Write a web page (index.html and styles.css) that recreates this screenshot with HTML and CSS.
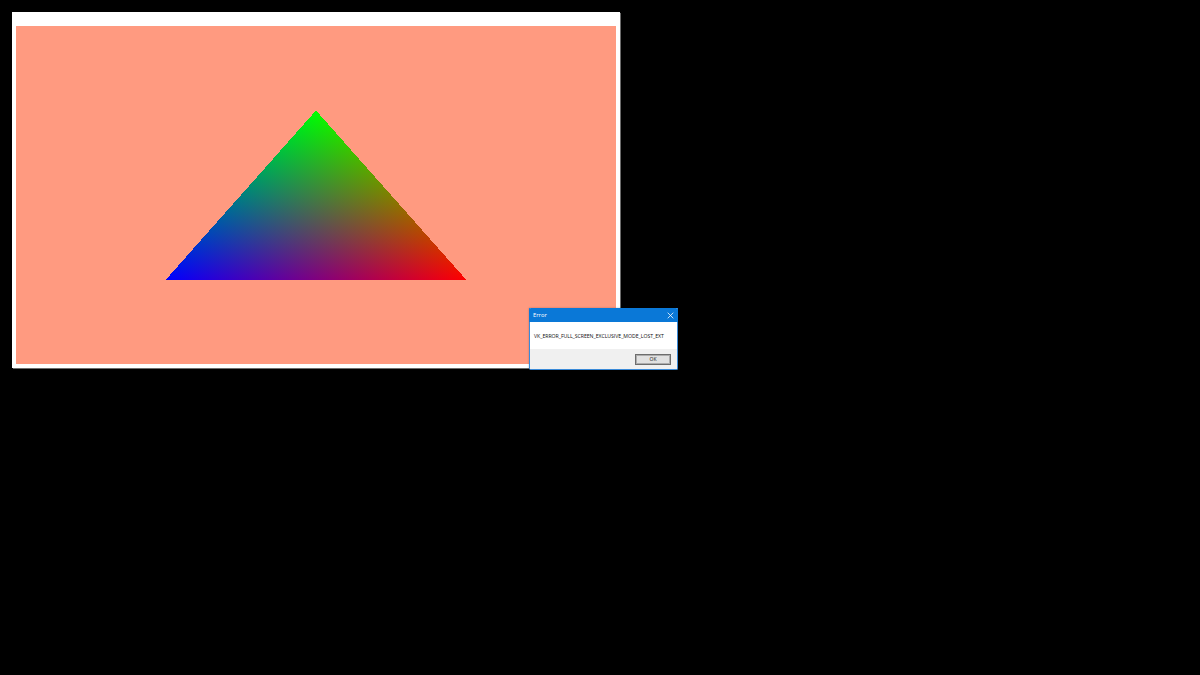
FILE: index.html
```html
<!DOCTYPE html>
<html>
<head>
<meta charset="utf-8">
<link rel="stylesheet" href="styles.css">
<title>Vulkan</title>
</head>
<body>
<div class="desktop">
  <div class="app-window">
    <div class="app-titlebar"></div>
    <div class="app-canvas">
      <svg class="tri" viewBox="0 0 600 338" width="600" height="338">
        <defs>
          <linearGradient id="gr" gradientUnits="userSpaceOnUse" x1="450" y1="253.5" x2="282.2" y2="104.56">
            <stop offset="0" stop-color="#ff0000"/>
            <stop offset="1" stop-color="#000000"/>
          </linearGradient>
          <linearGradient id="gb" gradientUnits="userSpaceOnUse" x1="150" y1="253.5" x2="317.8" y2="104.56">
            <stop offset="0" stop-color="#0000ff"/>
            <stop offset="1" stop-color="#000000"/>
          </linearGradient>
          <linearGradient id="gg" gradientUnits="userSpaceOnUse" x1="300" y1="84.5" x2="300" y2="253.5">
            <stop offset="0" stop-color="#00ff00"/>
            <stop offset="1" stop-color="#000000"/>
          </linearGradient>
        </defs>
        <g class="tri-group">
          <polygon class="base" points="300,84.5 450,253.5 150,253.5" fill="url(#gr)"/>
          <polygon class="add" points="300,84.5 450,253.5 150,253.5" fill="url(#gb)"/>
          <polygon class="add" points="300,84.5 450,253.5 150,253.5" fill="url(#gg)"/>
        </g>
      </svg>
    </div>
  </div>

  <div class="dialog">
    <div class="dlg-title">
      <span class="dlg-caption">Error</span>
      <svg class="dlg-close" viewBox="0 0 10 10" width="7" height="7"><path d="M1 1L9 9M9 1L1 9" stroke="#fff" stroke-width="1.1" fill="none"/></svg>
    </div>
    <div class="dlg-body">VK_ERROR_FULL_SCREEN_EXCLUSIVE_MODE_LOST_EXT</div>
    <div class="dlg-footer">
      <button class="dlg-ok">OK</button>
    </div>
  </div>
</div>
</body>
</html>
```
FILE: styles.css
```css
html, body {
  margin: 0;
  padding: 0;
  background: #000;
  width: 1200px;
  height: 675px;
  overflow: hidden;
}
.desktop {
  position: relative;
  width: 1200px;
  height: 675px;
  padding: 12px 0 0 12px;
  box-sizing: border-box;
}
.app-window {
  width: 608px;
  height: 356px;
  background: #fff;
  box-sizing: border-box;
  padding: 0 3px 3px 4px;
  display: flex;
  flex-direction: column;
  box-shadow: 1px 1px 0 #6b6b6b;
}
.app-titlebar {
  height: 14px;
  flex: none;
}
.app-canvas {
  width: 600px;
  height: 338px;
  background: #ff9a80;
}
.tri {
  display: block;
}
.tri-group {
  isolation: isolate;
}
.tri-group polygon {
  shape-rendering: crispEdges;
}
.add {
  mix-blend-mode: plus-lighter;
}
.dialog {
  position: absolute;
  left: 529px;
  top: 308px;
  width: 149px;
  height: 62px;
  box-sizing: border-box;
  border: 1px solid #3a8ad8;
  border-top: none;
  border-radius: 0 0 2px 2px;
  background: #fff;
  display: flex;
  flex-direction: column;
  font-family: "Open Sans", "Noto Sans", sans-serif;
  box-shadow: 0 0 2px rgba(0,0,0,0.3);
}
.dlg-title {
  height: 14px;
  background: #0a78d7;
  display: flex;
  align-items: center;
  justify-content: space-between;
  padding: 0 4px 0 4px;
  margin: 0 -1px;
  flex: none;
  border-radius: 2px 2px 0 0;
}
.dlg-caption {
  color: #fff;
  font-size: 5.8px;
}
.dlg-close {
  display: block;
}
.dlg-body {
  height: 27px;
  display: flex;
  align-items: center;
  padding-left: 4px;
  font-size: 5.2px;
  color: #111;
  flex: none;
  letter-spacing: -0.05px;
}
.dlg-footer {
  flex: 1;
  background: #f0f0f0;
  display: flex;
  justify-content: flex-end;
  align-items: center;
  padding-right: 6px;
}
.dlg-ok {
  width: 36px;
  height: 11px;
  box-sizing: border-box;
  border: 1px solid #6d6d6d;
  outline: 1px solid #adadad;
  outline-offset: -2px;
  background: #e1e1e1;
  font-family: "Open Sans", "Noto Sans", sans-serif;
  font-size: 5px;
  color: #111;
  padding: 0;
  line-height: 9px;
}
```
